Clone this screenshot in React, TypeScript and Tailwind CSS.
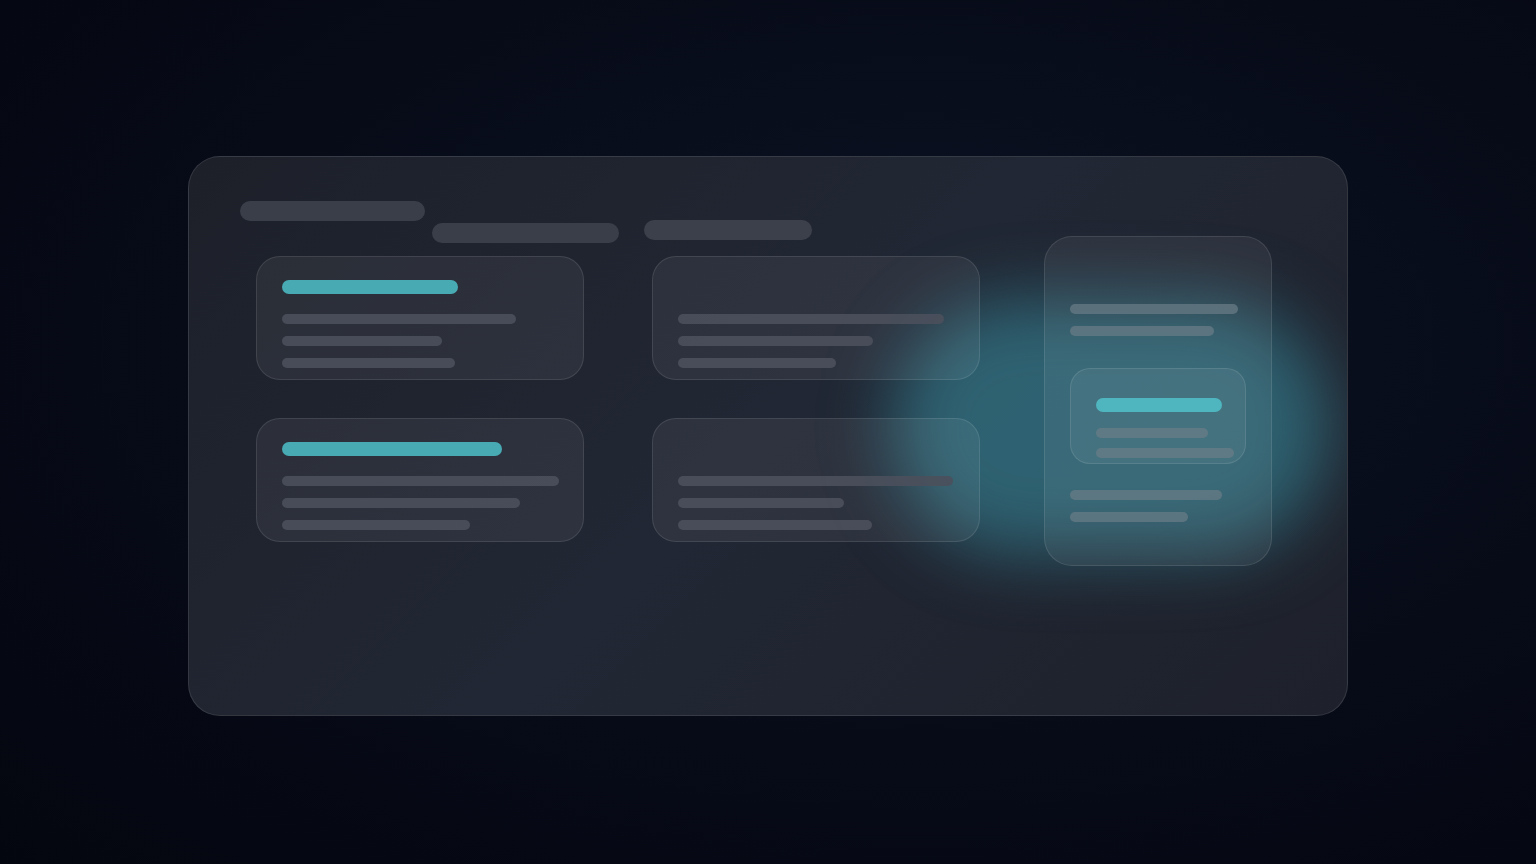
const Line = ({ w, tone = 'gray' }: { w: string; tone?: 'gray' | 'soft' }) => (
  <div
    className={`h-[10px] rounded-full ${w} ${tone === 'gray' ? 'bg-[#4b505c]/90' : 'bg-[#6b7d88]/70'}`}
  />
)

function Card({ teal, lines }: { teal?: string; lines: string[] }) {
  return (
    <div className="h-[124px] w-[328px] rounded-[24px] border border-white/10 bg-white/[0.06] pl-[25px] pt-[23px]">
      {teal ? (
        <div className={`h-[14px] rounded-full bg-[#48aab3] ${teal}`} />
      ) : (
        <div className="h-[14px]" />
      )}
      <div className="mt-[20px] flex flex-col gap-[12px]">
        {lines.map((w, i) => (
          <Line key={i} w={w} />
        ))}
      </div>
    </div>
  )
}

export default function App() {
  return (
    <div className="min-h-[864px] w-full overflow-hidden bg-[radial-gradient(ellipse_at_60%_40%,#0c1324_0%,#070b18_55%,#04060f_100%)] pt-[156px]">
      <div className="relative mx-auto h-[560px] w-[1160px] overflow-hidden rounded-[32px] border border-white/10 bg-[linear-gradient(135deg,#1d2029_0%,#212734_50%,#1e212b_100%)] pl-[51px] pt-[44px]">
        {/* teal glow behind the right column */}
        <div className="pointer-events-none absolute left-[702px] top-[142px] h-[256px] w-[440px] rounded-full bg-[#3b93a6]/55 blur-[34px]" />

        <div className="relative flex h-[35px] items-start">
          <div className="h-[20px] w-[185px] rounded-full bg-[#3a3e49]" />
          <div className="ml-[7px] mt-[22px] h-[20px] w-[187px] rounded-full bg-[#3a3e49]" />
          <div className="ml-[25px] mt-[19px] h-[20px] w-[168px] rounded-full bg-[#3b404b]" />
        </div>

        <div className="relative flex items-start">
          <div className="ml-[16px] mt-[20px] grid grid-cols-[328px_328px] gap-x-[68px] gap-y-[38px]">
            <Card teal="w-[176px]" lines={['w-[234px]', 'w-[160px]', 'w-[173px]']} />
            <Card lines={['w-[266px]', 'w-[195px]', 'w-[158px]']} />
            <Card teal="w-[220px]" lines={['w-[277px]', 'w-[238px]', 'w-[188px]']} />
            <Card lines={['w-[275px]', 'w-[166px]', 'w-[194px]']} />
          </div>

          <div className="ml-[64px] h-[330px] w-[228px] rounded-[28px] border border-white/10 bg-white/[0.06] pl-[25px] pt-[67px]">
            <div className="flex flex-col gap-[12px]">
              <Line w="w-[168px]" tone="soft" />
              <Line w="w-[144px]" tone="soft" />
            </div>
            <div className="mt-[32px] h-[96px] w-[176px] rounded-[20px] border border-white/10 bg-white/[0.06] pl-[25px] pt-[29px]">
              <div className="h-[14px] w-[126px] rounded-full bg-[#4fb6c0]" />
              <div className="mt-[16px] flex flex-col gap-[10px]">
                <Line w="w-[112px]" tone="soft" />
                <Line w="w-[138px]" tone="soft" />
              </div>
            </div>
            <div className="mt-[26px] flex flex-col gap-[12px]">
              <Line w="w-[152px]" tone="soft" />
              <Line w="w-[118px]" tone="soft" />
            </div>
          </div>
        </div>
      </div>
    </div>
  )
}
